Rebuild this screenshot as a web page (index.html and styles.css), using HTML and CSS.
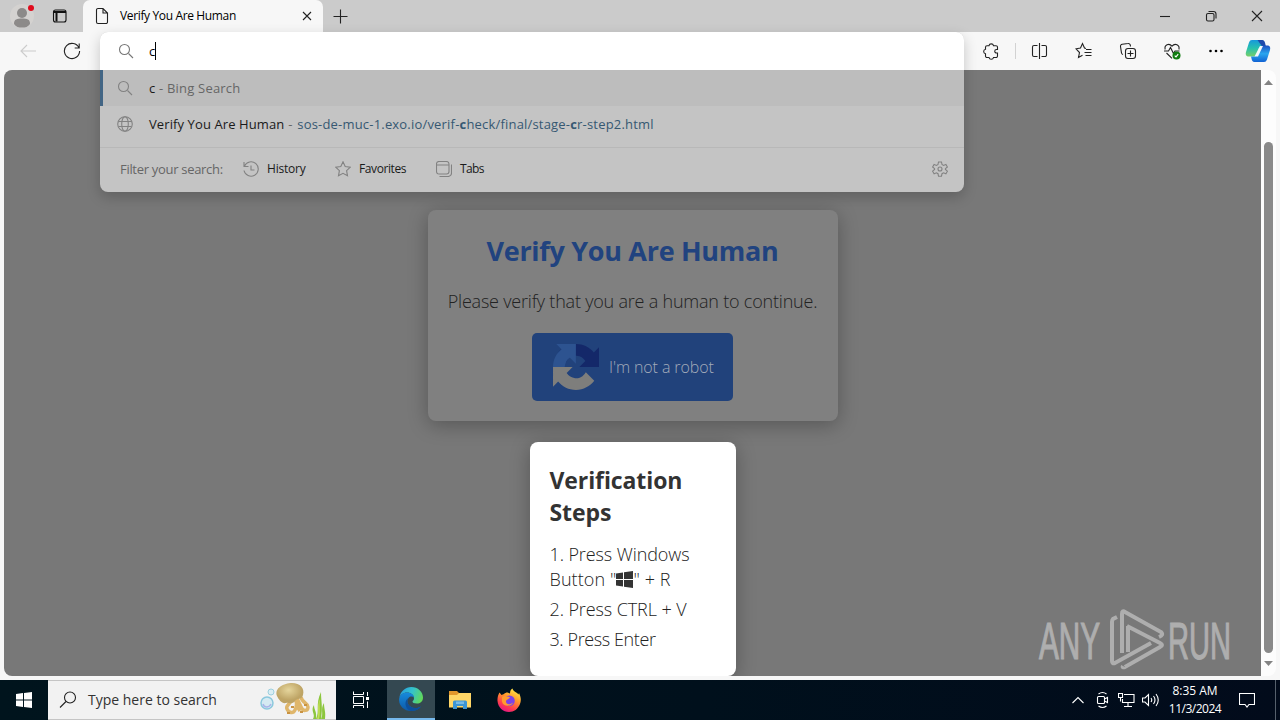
FILE: index.html
```html
<!DOCTYPE html>
<html lang="en">
<head>
	<meta charset="UTF-8">
	<title>Verify You Are Human</title>
	<link rel="stylesheet" href="styles.css">
</head>
<body>
	<div class="tabbar">
		<div class="profile">
			<svg width="28" height="28" viewBox="0 0 28 28"><circle cx="14" cy="14" r="12" fill="#d4d2d0"/><circle cx="14" cy="11" r="5" fill="#8c8a89"/><path d="M6 22c0-5 3-5.500 8-5.500s8 .5 8 5.500c-2 3-4.500 3.500-8 3.500s-6-.5-8-3.500z" fill="#8c8a89"/><circle cx="23" cy="6" r="3" fill="#e00b1c"/></svg>
		</div>
		<div class="workspace">
			<svg class="line" width="16" height="16" viewBox="0 0 16 16"><rect x="1.500" y="2" width="12.500" height="12" rx="2"/><path d="M2 4h12M4.500 4v9.500" stroke-width="2"/></svg>
		</div>
		<div class="tab">
			<svg class="line" width="14" height="18" viewBox="0 0 14 18"><path d="M1.500 3a1.500 1.500 0 0 1 1.500-1.500h5l4.500 4.500v9a1.500 1.500 0 0 1-1.500 1.500H3A1.500 1.500 0 0 1 1.500 15zM8 1.500V6h4.500"/></svg>
			<span class="tab-title">Verify You Are Human</span>
			<svg class="line" width="10" height="10" viewBox="0 0 10 10"><path d="M1 1l8 8M9 1L1 9"/></svg>
		</div>
		<div class="new-tab"><svg class="line" width="16" height="16" viewBox="0 0 16 16"><path d="M8.500 1.500v14M1.500 8.500h14"/></svg></div>
		<div class="win">
			<span><svg class="line" width="12" height="12" viewBox="0 0 12 12"><path d="M1 6.500h10"/></svg></span>
			<span><svg class="line" width="12" height="12" viewBox="0 0 12 12"><rect x="1.500" y="3.500" width="7.500" height="7.500" rx="1.500"/><path d="M3.500 1.500H8.500a2.500 2.500 0 0 1 2.500 2.500v4.500"/></svg></span>
			<span><svg class="line" width="12" height="12" viewBox="0 0 12 12"><path d="M1 1l10 10M11 1L1 11"/></svg></span>
		</div>
	</div>

	<div class="toolbar">
		<div class="cell"><svg class="line faint" width="18" height="14" viewBox="0 0 18 14"><path d="M17 7H2M8 1L2 7l6 6"/></svg></div>
		<div class="cell"><svg class="line" width="18" height="18" viewBox="0 0 18 18"><path d="M16 6a7.600 7.600 0 1 0 .6 3M16.200 1.500V6h-4.500"/></svg></div>
		<div class="tools">
			<div class="cell ext"><svg class="line" width="18" height="18" viewBox="0 0 18 18"><path d="M3.500 5.200a1.500 1.500 0 0 1 1.500-1.500h2a2.300 2.300 0 0 1 4.500 0h2.500a1.500 1.500 0 0 1 1.500 1.500V7.500h-1a1.700 1.700 0 0 0 0 3.500h1v3a1.500 1.500 0 0 1-1.500 1.500h-2.500a2.300 2.300 0 0 1-4.500 0H5a1.500 1.500 0 0 1-1.500-1.500v-2.300a2.300 2.300 0 0 1 0-4.500z"/></svg></div>
			<div class="cell"><svg class="line" width="18" height="18" viewBox="0 0 18 18"><path d="M6.500 3.500H3a1.500 1.500 0 0 0-1.500 1.500v8A1.500 1.500 0 0 0 3 14.500h3.500M10.500 3.500H14a1.500 1.500 0 0 1 1.500 1.500v8a1.500 1.500 0 0 1-1.500 1.500h-3.500M8.500 1v16"/></svg></div>
			<div class="cell"><svg class="line" width="18" height="18" viewBox="0 0 18 18"><path d="M11 6.500L9.500 6 7.500 1.500 5.500 6l-4.500.8L4.500 10.500 3.500 15.500l4-2.200M11 7.500h5.500M9.500 10.500h7M10.500 13.500h6"/></svg></div>
			<div class="cell"><svg class="line" width="18" height="18" viewBox="0 0 18 18"><rect x="6.500" y="6.500" width="10" height="10" rx="2.500"/><path d="M11.500 8.500v6M8.500 11.500h6M4 12.500a2 2 0 0 1-1.500-1.500L1.500 4.500a2 2 0 0 1 1.700-2.300L9 1.500a2 2 0 0 1 2.300 1.700l.2 1.300"/></svg></div>
			<div class="cell"><svg class="line" width="18" height="18" viewBox="0 0 18 18"><path d="M2.200 7.500C1 3 6 .5 9 4.200 12 .5 17 3 15.900 7.500M1 9h4.500l2-3.500 3 6L12 9h4.500M3.500 11L9 16.300"/><circle cx="13.500" cy="13.500" r="4" fill="#107c10" stroke="none"/><path d="M11.700 13.700l1.300 1.200 2.200-2.700" stroke="#fff"/></svg></div>
			<div class="cell"><svg width="18" height="6" viewBox="0 0 18 6"><circle cx="3.500" cy="3" r="1.300"/><circle cx="9" cy="3" r="1.300"/><circle cx="14.500" cy="3" r="1.300"/></svg></div>
			<div class="cell copilot">
				<svg width="26" height="24" viewBox="0 0 26 24">
					<defs>
						<linearGradient id="ca" x1="0" y1="0" x2="0" y2="1"><stop offset="0" stop-color="#1798dc"/><stop offset=".5" stop-color="#27c1ae"/><stop offset="1" stop-color="#78cf69"/></linearGradient>
						<linearGradient id="cb" x1="0" y1="0" x2="0" y2="1"><stop offset="0" stop-color="#1d4fc0"/><stop offset=".5" stop-color="#29a6ef"/><stop offset="1" stop-color="#1162d3"/></linearGradient>
					</defs>
					<path d="M7 1h9.500c2 0 2.500 1.500 3 3.500l.5 2.500h-3c-2 0-2.800 1-3.300 2.700L12 15c-.6 2-1.500 2.500-3.500 2.500H4c-3 0-3.700-2-3-4.500L4 3.500C4.700 1.800 5.500 1 7 1z" fill="url(#ca)"/>
					<path d="M12.500 1H17c2 0 2.700 1.500 3.200 3.500l.6 2.500h-4z" fill="#1e49ab"/>
					<path d="M19 23H9.500c-2 0-2.500-1.500-3-3.500L6 17.500h3c2 0 2.800-1 3.300-2.700L14.500 9c.6-1.800 1.500-2.500 3.500-2.500h4c3 0 3.700 2 3 4.500l-3 9.500c-.7 1.700-1.500 2.500-3 2.500z" fill="url(#cb)"/>
					<path d="M15 7h3L13 17.500h-3.500z" fill="#f4f8fb"/>
				</svg>
			</div>
		</div>
	</div>

	<div class="main">
		<div class="page">
			<div class="card">
				<h1><span>Verify You Are Human</span></h1>
				<p><span>Please verify that you are a human to continue.</span></p>
				<div class="robot">
					<svg width="46" height="46" viewBox="0 0 64 64">
						<path fill="#142869" d="M64 31.955l-.033-1.370V4.687l-7.160 7.160C50.948 4.674 42.033.093 32.050.093c-10.400 0-19.622 4.960-25.458 12.640l11.736 11.860a15.550 15.550 0 0 1 4.754-5.334c2.050-1.600 4.952-2.906 8.968-2.906.485 0 .860.057 1.135.163 4.976.393 9.288 3.140 11.828 7.124l-8.307 8.307L64 31.953"/>
						<path fill="#2d5390" d="M31.862.094l-1.370.033H4.594l7.160 7.160C4.580 13.147 0 22.060 0 32.046c0 10.400 4.960 19.622 12.640 25.458L24.500 45.768a15.550 15.550 0 0 1-5.334-4.754c-1.600-2.050-2.906-4.952-2.906-8.968 0-.485.057-.860.163-1.135.393-4.976 3.140-9.288 7.124-11.828l8.307 8.307L31.860.095"/>
						<path fill="#7e7e7c" d="M.001 32.045l.033 1.370v25.898l7.160-7.160c5.860 7.173 14.774 11.754 24.760 11.754 10.400 0 19.622-4.960 25.458-12.640l-11.736-11.860a15.550 15.550 0 0 1-4.754 5.334c-2.050 1.600-4.952 2.906-8.968 2.906-.485 0-.860-.057-1.135-.163-4.976-.393-9.288-3.140-11.828-7.124l8.307-8.307c-10.522.040-22.400.066-27.295-.005"/>
					</svg>
					<span>I'm not a robot</span>
				</div>
			</div>
			<div class="steps">
				<h2>Verification<br>Steps</h2>
				<p><span class="s3">1. Press Windows</span><br><span class="s4">Button "<svg width="17" height="17" viewBox="0 0 17 17"><path fill="#333" d="M0 2.500l7-1v6.500H0zM8 1.300L17 0v8H8zM0 9h7v6.500l-7-1zM8 9h9v8l-9-1.300z"/></svg>" + R</span></p>
				<p><span class="s5">2. Press CTRL + V</span></p>
				<p><span class="s6">3. Press Enter</span></p>
			</div>
			<!-- watermark -->
			<svg class="anyrun" width="200" height="64" viewBox="0 0 200 64">
				<g class="wm-text">
					<text x="2" y="50" textLength="61" lengthAdjust="spacingAndGlyphs">ANY</text>
					<text x="131" y="50" textLength="63" lengthAdjust="spacingAndGlyphs">RUN</text>
				</g>
				<path class="wm-line" d="M80 8l-4 2q-1 1-1 3v39q0 3 3 2L114 34M85 44V5q0-4 3-2L124 23q3 3-2 5M90 17l33 17q4 2 0 4L88 58q-3 1-2-1M91 17v26"/>
			</svg>
		</div>
		<div class="scroll">
			<svg width="9" height="5" viewBox="0 0 9 5"><path fill="#838383" d="M0 5l4.500-5L9 5z"/></svg>
			<div class="thumb"></div>
			<svg width="9" height="5" viewBox="0 0 9 5"><path fill="#838383" d="M0 0h9L4.500 5z"/></svg>
		</div>
	</div>

	<div class="taskbar">
		<div class="start"><svg width="16" height="16" viewBox="0 0 16 16"><path fill="#fff" d="M0 2l7-1v6.600H0zM8 .9L16 0v7.600H8zM0 8.400h7V15l-7-1zM8 8.400h8V16l-8-.9z"/></svg></div>
		<div class="search">
			<svg class="line" width="18" height="18" viewBox="0 0 18 18"><circle cx="11" cy="6.500" r="5.500"/><path d="M7 10.500L1 16.500"/></svg>
			<span class="search-text">Type here to search</span>
			<svg class="sea" width="72" height="38" viewBox="0 0 72 38">
				<defs><radialGradient id="jelly" cx=".45" cy=".35"><stop offset="0" stop-color="#e5d59c"/><stop offset="1" stop-color="#bea465"/></radialGradient></defs>
				<circle cx="7" cy="22" r="6" fill="#d5eaf2" stroke="#8bc8dd" stroke-width="1.500"/><circle cx="11" cy="11" r="3" fill="#d9edf3" stroke="#9dcfdf"/>
				<path d="M3 23c1 4 6 4 8 0" fill="none" stroke="#a9b4e8" stroke-width="1.500"/>
				<path d="M31 18c0 6-6 6-4 10s6 5 8 1 2-8 0-11M36 17c0 5 2 10 4 13M41 16c1 6 7 6 7 10s-5 5-7 0-4-7-4-10" fill="none" stroke="#dfb66b" stroke-width="3.500"/>
				<path d="M27 32h3m1-6h3m6 5h3m1-7h3" stroke="#c99343" stroke-width="2"/>
				<path d="M17 15C14 7 24 2 32 2c8 0 13 5 11 12-1 5-6 3-8 6-3 4-6 1-9 2-4 1-7-3-9-7z" fill="url(#jelly)"/>
				<path d="M53 38c3-5-3-8 1-14 0 5 3 6 2 14 4-8-1-14 5-27 0 10 2 14 0 27 3-5-1-10 3-16 0 7 2 8 1 16z" fill="#8cc63d"/>
				<path d="M57 38c3-8-1-12 3-20-1 9 1 12-1 20z" fill="#c3df55"/>
			</svg>
		</div>
		<div class="app"><svg width="18" height="18" viewBox="0 0 18 18" fill="none" stroke="#fff"><path d="M1.500 2V.5M1 3.500h10.500M11.500 1v2.500M1.500 1v2.500M1.500 5.500h10v7h-10zM1.500 17v-2.500h10V17M15.500 1v4M15.500 10.500V17"/><path d="M14 7.500h3" stroke-width="3"/></svg></div>
		<div class="app active">
			<svg width="24" height="24" viewBox="0 0 24 24">
				<defs>
					<linearGradient id="ea" x1="0" y1=".3" x2="1" y2=".6"><stop offset="0" stop-color="#269fe1"/><stop offset=".5" stop-color="#35c3ca"/><stop offset="1" stop-color="#62d957"/></linearGradient>
					<linearGradient id="eb" x1="0" y1="0" x2="0" y2="1"><stop offset="0" stop-color="#168bdd"/><stop offset="1" stop-color="#0e59a6"/></linearGradient>
				</defs>
				<path d="M.3 11C1.500 4 6.500 0 12.300 0 19 0 24 5 24 10.500c0 4-3 6-6 6-3.200 0-4.500-1-4.500-2 0-.7 1.500-1 1.500-3.300C15 8 12 5.500 8 5.500 4 5.500 1 8 .3 11z" fill="url(#ea)"/>
				<path d="M.2 11.500C1 7.500 4.500 5.500 8 5.500c4 0 7 2.500 7 5-1.500-1.300-4-1.200-5.500.5-3.500 4 1 10 7 10 2.500 0 4-.6 5.500-1.500C19.700 22.500 16 24 12 24 4.500 24-.7 18 .2 11.500z" fill="url(#eb)"/>
				<path d="M9.500 11c-3.500 4 1 10 7 10 2.500 0 4-.6 5.500-1.500C19.700 22.500 16 24 12 24 6 22.500 4.500 13.500 9.500 11z" fill="#0d4f9b"/>
			</svg>
		</div>
		<div class="app"><svg width="22" height="20" viewBox="0 0 22 20"><path fill="#e2972c" d="M0 1h8l2 2h11v5H0z"/><path fill="#ffd667" d="M0 5h8l2-2h12v14.500H0z"/><path fill="#3b94d5" d="M4 19v-7q0-1.500 1.500-1.500h11Q18 10.500 18 12v7h-4v-3H8v3z"/><path fill="#76b9e6" d="M7 11.500h8V14H7z"/></svg></div>
		<div class="app">
			<svg width="24" height="24" viewBox="0 0 24 24">
				<defs><linearGradient id="fx" x1=".8" y1="0" x2=".3" y2="1"><stop offset="0" stop-color="#fff04b"/><stop offset=".4" stop-color="#ff9a2b"/><stop offset=".75" stop-color="#ff3d4d"/><stop offset="1" stop-color="#e31587"/></linearGradient></defs>
				<path d="M2.500 4.500l2 2.500 2.500-1C8 5 9 4.500 10.500 4.500l2.500 1c0-2.500 1-4.500 2.500-5 .5 3 5 4 6 6l.5-1.500C24.500 10 24 13 23 16c-2 5-6 8-11 8C6 24 1 19.500.5 13 .3 10 1 7 2.500 4.500z" fill="url(#fx)"/>
				<circle cx="12.500" cy="12.800" r="5.300" fill="#7b42e8"/><path d="M5 9c3-2 5 0 8 0-1 3-4 2-4 4.500 0 3 4 4 7 1-1 4-10 5-11-1z" fill="#ff9c2f"/>
			</svg>
		</div>
		<div class="tray">
			<svg class="chevron" width="12" height="18" viewBox="0 0 12 18"><path d="M.5 12L6 6.500l5.500 5.500"/></svg>
			<svg width="13" height="18" viewBox="0 0 13 18"><rect x="1.500" y="5.500" width="7" height="7" rx="1"/><path d="M8.500 8l3-1.500v5l-3-1.500M2.500 3q4-3 8 0M2.500 15q4 3 8 0"/></svg>
			<svg class="network" width="17" height="18" viewBox="0 0 17 18"><path d="M6 3.500h10v8H4.500V8M10 11.500v4M6 15.500h8M.5 2.500h4v4h-4zM2.500 6.500v4"/></svg>
			<svg width="17" height="18" viewBox="0 0 17 18"><path d="M.5 7v4H3l3.500 3.500v-11L3 7zM9 7q1.500 2 0 4M11.500 5q3 4 0 8M14 3q4.500 6 0 12"/></svg>
			<div class="clock"><span class="time">8:35 AM</span><span class="date">11/3/2024</span></div>
			<svg width="16" height="18" viewBox="0 0 16 18"><path d="M.5 2.500h15v11H10L8 16l-2-2.500H.5z"/></svg>
		</div>
		<div class="peek"></div>
	</div>

	<div class="omnibox">
		<div class="entry">
			<svg class="line grey" width="16" height="16" viewBox="0 0 16 16"><circle cx="6.500" cy="6.500" r="5"/><path d="M10.500 10.500l4.500 4.500"/></svg>
			<span class="typed">c</span><i class="caret"></i>
		</div>
		<div class="row selected">
			<svg class="line dim" width="16" height="16" viewBox="0 0 16 16"><circle cx="6.500" cy="6.500" r="5"/><path d="M10.500 10.500l4.500 4.500"/></svg>
			<span class="sug1">c <em>- Bing Search</em></span>
		</div>
		<div class="row">
			<svg class="line dim" width="16" height="16" viewBox="0 0 16 16"><circle cx="8" cy="8" r="7.300"/><path d="M1.500 5.500h13M1.500 10.500h13"/><ellipse cx="8" cy="8" rx="3.300" ry="7.300"/></svg>
			<span class="sug2">Verify You Are Human</span><span class="url">- <em>sos-de-muc-1.exo.io/verif-<b>c</b>heck/final/stage-<b>c</b>r-step2.html</em></span>
		</div>
		<div class="filters">
			<span class="filter-label">Filter your search:</span>
			<svg class="line dim" width="16" height="16" viewBox="0 0 16 16"><path d="M1 1v4.500h4.500M1.500 5A7.200 7.200 0 1 1 1 9.500M8 4.500V9h3.500"/></svg>
			<span class="f1">History</span>
			<svg class="line dim" width="16" height="16" viewBox="0 0 16 16"><path d="M8 .8l2.200 4.700 5.100.7-3.700 3.500.9 5.100L8 12.300l-4.500 2.500.9-5.100L.7 6.200l5.100-.7z"/></svg>
			<span class="f2">Favorites</span>
			<svg class="line dim" width="16" height="16" viewBox="0 0 16 16"><rect x=".5" y=".5" width="12.500" height="12.500" rx="2.500"/><path d="M.5 4h12.500M15.500 3.500V12a3.500 3.500 0 0 1-3.500 3.500H3.500"/></svg>
			<span class="f3">Tabs</span>
			<svg class="line dim gear" width="16" height="16" viewBox="0 0 16 16"><path d="M6.500 1h3l.5 2.500 1.500.9 2.400-.9 1.500 2.500-2 1.700v.8l2 1.700-1.500 2.500-2.400-.9-1.500.9-.5 2.500h-3L6 12.700l-1.500-.9-2.400.9L.6 10.200l2-1.700v-.8L.6 6l1.500-2.500 2.400.9L6 3.500z"/><circle cx="8" cy="8" r="2"/></svg>
		</div>
	</div>
</body>
</html>
```
FILE: styles.css
```css
* {
	box-sizing: border-box;
}
body, h1, h2, p {
	margin: 0;
	padding: 0;
}
body {
	display: flex;
	flex-direction: column;
	position: relative;
	width: 1280px;
	height: 720px;
	overflow: hidden;
	font: 12px/16px "Open Sans", "Noto Sans", sans-serif;
	color: #000;
	background: #f7f7f7;
}
svg {
	display: block;
	flex: none;
}
span {
	white-space: nowrap;
}
.line {
	fill: none;
	stroke: #222;
	stroke-width: 1.1;
}
.faint {
	stroke: #ccc;
}
.grey {
	stroke: #777;
}
.dim {
	stroke: #828282;
}

/* tab strip */
.tabbar {
	display: flex;
	align-items: center;
	height: 32px;
	background: #cbcbcb;
}
.profile {
	padding-left: 8px;
	width: 52px;
}
.workspace {
	width: 31px;
}
.workspace svg {
	stroke: #111;
}
.tab {
	display: flex;
	align-items: center;
	width: 240px;
	height: 32px;
	padding: 0 11px 0 12px;
	background: #f7f7f7;
	border-radius: 7px 7px 0 0;
}
.tab-title {
	flex: 1;
	padding-left: 11px;
	letter-spacing: -0.36px;
}
.new-tab {
	padding-left: 9px;
}
.win {
	display: flex;
	margin-left: auto;
}
.win span {
	display: flex;
	justify-content: center;
	width: 46px;
}

/* toolbar */
.toolbar {
	display: flex;
	align-items: center;
	height: 38px;
	padding: 0 2px 0 6px;
	flex: none;
}
.cell {
	display: flex;
	justify-content: center;
	align-items: center;
	width: 44px;
	height: 38px;
}
.tools {
	display: flex;
	align-items: center;
	margin-left: auto;
}
.ext {
	width: 50px;
	position: relative;
	margin-right: 2px;
}
.ext:after {
	content: "";
	position: absolute;
	right: 0;
	top: 11px;
	width: 1px;
	height: 16px;
	background: #d2d2d2;
}
.copilot {
	width: 40px;
}

/* page */
.main {
	display: flex;
	height: 606px;
	padding: 0 4px;
	flex: none;
}
.page {
	position: relative;
	display: flex;
	flex-direction: column;
	align-items: center;
	width: 1257px;
	padding-top: 140px;
	background: #787878;
	border-radius: 8px 0 0 8px;
	overflow: hidden;
	font-weight: 300;
}
.card {
	width: 410px;
	height: 211px;
	padding-top: 22px;
	background: #808080;
	border-radius: 8px;
	box-shadow: 0 4px 20px rgba(0, 0, 0, 0.28);
	text-align: center;
	color: #222;
}
.card h1 {
	font-size: 27px;
	line-height: 38px;
	font-weight: 700;
	letter-spacing: -0.3px;
	color: #21437f;
}
.card p {
	margin-top: 18px;
	font-size: 18px;
	line-height: 26px;
	letter-spacing: -0.21px;
}
.robot {
	display: flex;
	align-items: center;
	width: 201px;
	height: 68px;
	margin: 19px auto 0;
	padding-left: 21px;
	background: #21427b;
	border-radius: 5px;
	font-size: 16px;
	letter-spacing: -0.1px;
	color: #a3abba;
}
.robot span {
	margin-left: 10px;
}
.steps {
	width: 206px;
	height: 234px;
	margin-top: 21px;
	padding: 22px 20px;
	background: #fff;
	border-radius: 8px;
	box-shadow: 0 4px 20px rgba(0, 0, 0, 0.28);
	font-size: 18px;
	line-height: 25px;
	color: #222;
}
.steps h2 {
	margin-bottom: 14px;
	font-size: 23px;
	line-height: 32px;
	font-weight: 700;
	letter-spacing: -0.1px;
	color: #333;
}
.steps p {
	margin-bottom: 5px;
}
.steps p svg {
	display: inline-block;
	vertical-align: -2px;
}
.s3, .s5 {
	letter-spacing: -0.1px;
}
.s4 {
	letter-spacing: 0.1px;
}
.s6 {
	letter-spacing: -0.4px;
}
.anyrun {
	position: absolute;
	right: 24px;
	bottom: 3px;
}
.wm-text {
	font: 400 51px "Liberation Sans", sans-serif;
	fill: #aeaeae;
	stroke: #aeaeae;
	stroke-width: 1.2;
}
.wm-line {
	fill: none;
	stroke: #aeaeae;
	stroke-width: 4;
}
.scroll {
	display: flex;
	flex-direction: column;
	align-items: center;
	width: 15px;
	padding: 10px 0;
	background: #fdfdfd;
	border-radius: 0 8px 8px 0;
}
.thumb {
	flex: 1;
	width: 9px;
	margin: 57px 0 8px;
	background: #8a8a8a;
	border-radius: 5px;
}

/* taskbar */
.taskbar {
	display: flex;
	height: 40px;
	margin-top: 4px;
	background: linear-gradient(90deg, #00141d, #00101c 55%, #020b1b);
}
.start, .app {
	display: flex;
	justify-content: center;
	align-items: center;
	width: 48px;
}
.app {
	width: 49px;
}
.active {
	width: 48px;
	margin-left: 2px;
	background: #344851;
	border-bottom: 2px solid #76b9ed;
}
.search {
	display: flex;
	align-items: center;
	width: 288px;
	padding-left: 11px;
	border: 1px solid #c5c5c5;
	border-width: 1px 0;
	background: #f2f2f2;
	font-size: 14px;
}
.search-text {
	padding-left: 11px;
	color: #333;
}
.sea {
	margin: 0 4px 0 auto;
}
.tray {
	display: flex;
	align-items: center;
	margin-left: auto;
	padding-right: 20px;
	color: #fff;
}
.tray svg {
	margin-right: 9px;
	fill: none;
	stroke: #fff;
	stroke-width: 1.1;
}
.tray .chevron {
	margin-right: 12px;
}
.tray .network {
	margin-right: 7px;
}
.tray svg:last-child {
	margin-right: 0;
}
.clock {
	display: flex;
	flex-direction: column;
	align-items: center;
	width: 54px;
	margin-right: 17px;
	line-height: 18px;
}
.date {
	letter-spacing: -0.5px;
}
.peek {
	width: 5px;
	border-left: 1px solid #56606c;
}

/* address bar drop-down */
.omnibox {
	position: absolute;
	left: 100px;
	top: 32px;
	width: 864px;
	height: 160px;
	background: #c4c4c4;
	border-radius: 8px;
	box-shadow: 0 5px 14px rgba(0, 0, 0, 0.2);
	overflow: hidden;
	font-size: 13px;
}
.entry {
	display: flex;
	align-items: center;
	height: 38px;
	padding-left: 18px;
	background: #fff;
}
.typed {
	margin-left: 15px;
}
.caret {
	width: 1px;
	height: 18px;
	background: #000;
}
.row {
	display: flex;
	align-items: center;
	height: 36px;
	padding-left: 17px;
	color: #1a1a1a;
}
.row span {
	margin-left: 16px;
}
.row .sug1 {
	letter-spacing: 0.2px;
}
.row .sug2 {
	letter-spacing: 0.1px;
}
.row .url {
	margin-left: 4px;
	letter-spacing: 0.19px;
	color: #666;
}
.selected {
	padding-left: 14px;
	border-left: 3px solid #426584;
	background: #bdbdbd;
}
.row em {
	font-style: normal;
	color: #666;
}
.row .url em {
	margin-left: 1px;
	color: #365872;
}
.filters {
	display: flex;
	align-items: center;
	height: 43px;
	margin-top: 5px;
	padding: 0 16px 0 20px;
	border-top: 1px solid #b8b8b8;
	font-size: 12px;
	color: #1a1a1a;
}
.filter-label {
	width: 123px;
	color: #666;
	font-size: 13px;
	letter-spacing: -0.3px;
}
.filters .f1, .filters .f2, .filters .f3 {
	width: 68px;
	margin-left: 8px;
	letter-spacing: -0.2px;
}
.filters .f2 {
	width: 77px;
	letter-spacing: -0.4px;
}
.filters .f3 {
	letter-spacing: -0.6px;
}
.filters .gear {
	margin-left: auto;
}
```
